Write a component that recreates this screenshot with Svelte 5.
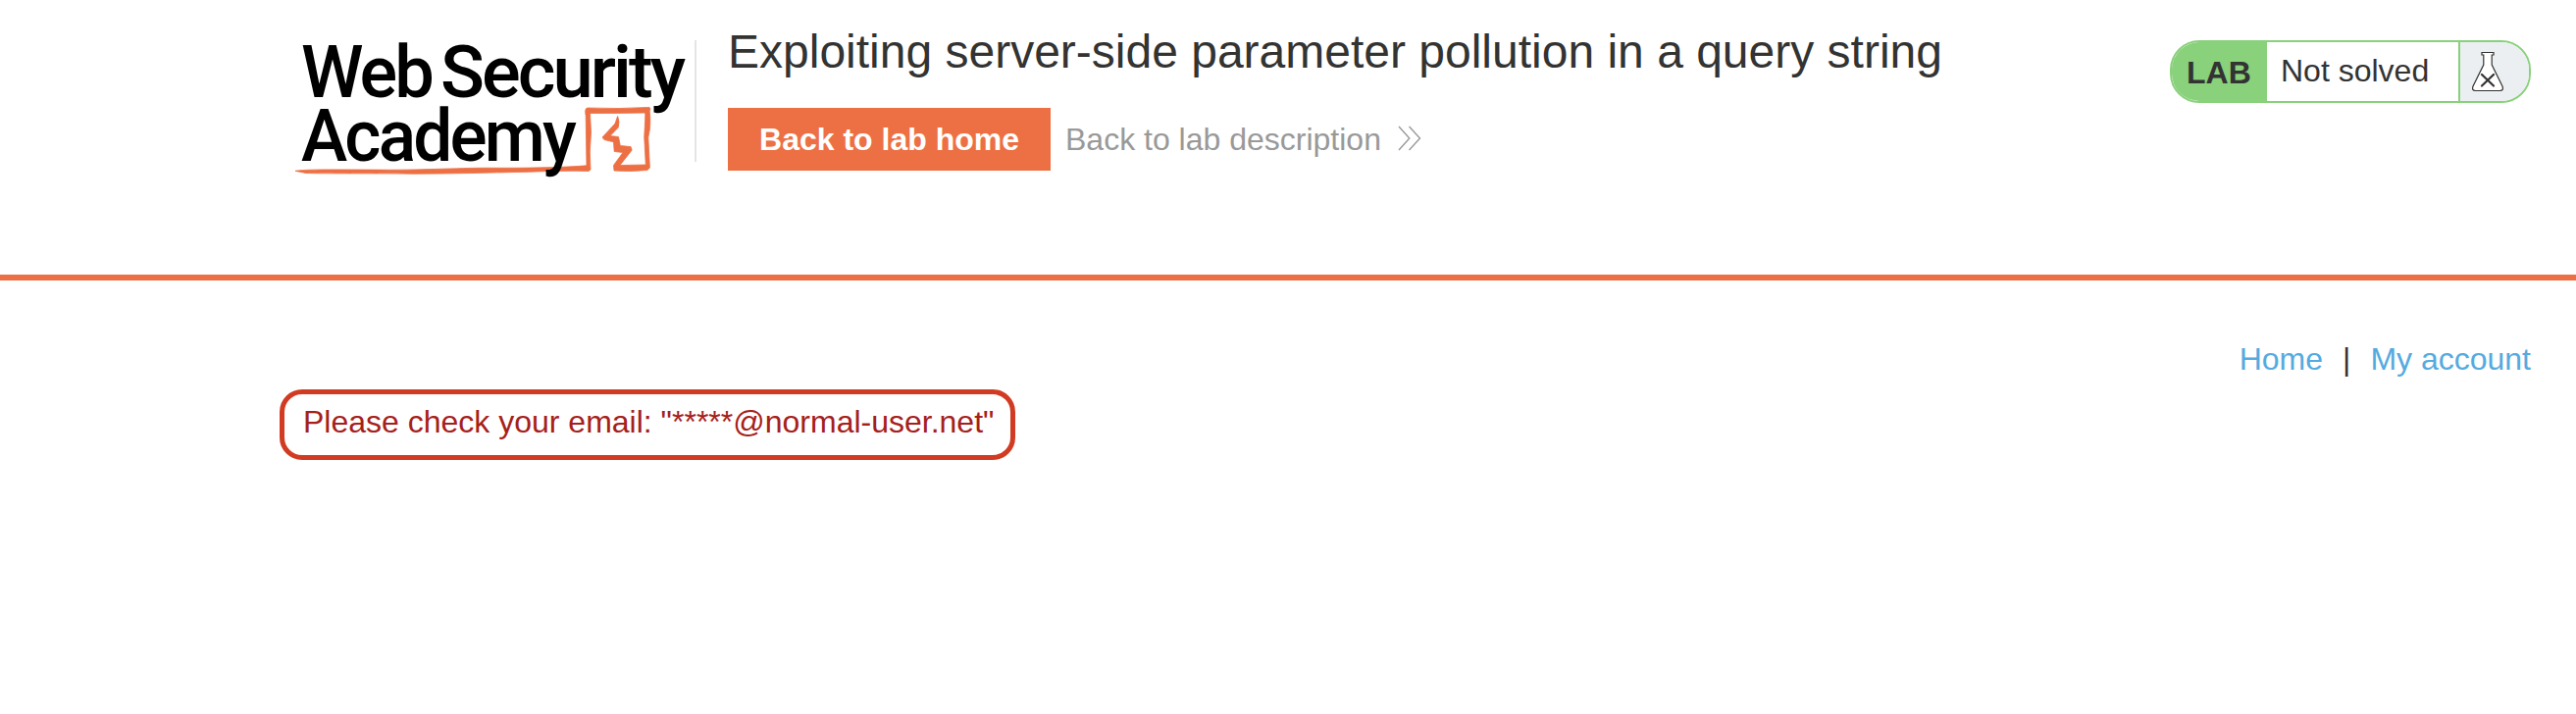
<script>
  const title = 'Exploiting server-side parameter pollution in a query string';
  const message = 'Please check your email: "*****@normal-user.net"';
</script>

<div class="page">
  <header class="banner">
    <a class="logo" href="#home" aria-label="Web Security Academy">
      <svg width="408" height="185" viewBox="300 10 408 185">
        <g class="sketch">
          <path d="M301 174.300C310 172.600 340 172.800 380 173.100C430 173.700 462 171.200 500 171.200C540 171.500 577 170.600 598 168.800L597.200 118Q595.600 110.300 599 110Q630 111.300 662 109.400Q663.800 110.500 662.200 113Q664 128 660.800 140L662.400 171L660 173.500Q643 175.300 626 174L625.500 168.500L635 155.500L626.200 154.500L625.500 144.800L616 142.500L614 140L627 126L629.600 118.500Q632 124 630.300 130L622 138.500L630.500 139.500L632.300 148.500L643 149.600L644.200 153L632 168.500L658.300 168L656.800 140C657.200 130 658 121 657.700 115Q630 115.500 601.500 115.500L602.500 135L601.300 155L602 173L600 174.500C580 173.800 560 174.500 540 175.200C500 176 460 177.300 420 177.200C375 176.600 330 177.200 312 176.500Z" />
        </g>
        <g class="wordmark">
          <text x="307" y="98.500" textLength="133" lengthAdjust="spacingAndGlyphs">Web</text>
          <text x="449" y="98.500" textLength="247" lengthAdjust="spacingAndGlyphs">Security</text>
          <text x="307" y="163.500" textLength="278" lengthAdjust="spacingAndGlyphs">Academy</text>
        </g>
      </svg>
    </a>
    <div class="heading">
      <h2>{title}</h2>
      <div class="actions">
        <a class="button" href="#lab">Back to lab home</a>
        <a class="back" href="#description">
          <span>Back to lab description</span>
          <svg width="24" height="26" viewBox="0 0 24 26"><path d="M1 1L11.800 13L1 25M11.500 1L22.500 13L11.500 25" /></svg>
        </a>
      </div>
    </div>
    <div class="status">
      <span class="lab">LAB</span>
      <span class="state">Not solved</span>
      <span class="flask">
        <svg width="34" height="42" viewBox="0 0 34 42">
          <path class="glass" d="M11 1.500H23V4H21.200V14L32 36Q33.500 40.500 29.500 40.500H4.500Q.5 40.500 2 36L12.800 14V4H11Z" />
          <path class="cross" d="M11 24L23 35.500M23 24L11 35.500" />
        </svg>
      </span>
    </div>
  </header>

  <nav>
    <a href="#home">Home</a>
    <span>|</span>
    <a href="#account">My account</a>
  </nav>

  <main>
    <p>{message}</p>
  </main>
</div>

<style>
  :global(body) {
    margin: 0;
    background: #fff;
  }
  .page {
    box-sizing: border-box;
    height: 728px;
    overflow: hidden;
    font: 32px/36px "Liberation Sans", Arial, sans-serif;
    color: #333332;
  }
  a {
    text-decoration: none;
  }
  svg {
    display: block;
  }
  .banner {
    box-sizing: border-box;
    height: 286px;
    padding: 0 46px 0 300px;
    border-bottom: 6px solid #ed7044;
    display: flex;
    align-items: flex-start;
  }
  .logo {
    margin-top: 10px;
  }
  .sketch {
    fill: #ed7044;
    stroke: #ed7044;
    stroke-width: 0.8;
  }
  .wordmark {
    font: 500 75px Roboto, sans-serif;
    letter-spacing: -3px;
    fill: #000;
  }
  .heading {
    margin-top: 41px;
    height: 124px;
    border-left: 2px solid #e5e5e5;
    padding-left: 32px;
  }
  h2 {
    margin: -16px 0 0;
    font-size: 48px;
    line-height: 56px;
    font-weight: 400;
    white-space: nowrap;
  }
  .actions {
    display: flex;
    margin-top: 29px;
    line-height: 64px;
  }
  .button {
    box-sizing: border-box;
    width: 329px;
    height: 64px;
    background: #ed7044;
    color: #fff;
    font-weight: 700;
    text-align: center;
    white-space: nowrap;
  }
  .back {
    margin-left: 15px;
    color: #999;
    display: flex;
    white-space: nowrap;
  }
  .back svg {
    margin: 18px 0 0 17px;
    fill: none;
    stroke: #999;
    stroke-width: 1.4;
  }
  .status {
    box-sizing: border-box;
    width: 368px;
    height: 64px;
    margin: 41px 0 0 auto;
    border: 2px solid #89d17b;
    border-radius: 30px;
    display: flex;
    overflow: hidden;
    line-height: 60px;
  }
  .lab {
    box-sizing: border-box;
    width: 97px;
    padding: 1px 0 0 15px;
    background: #89d17b;
    font-weight: 700;
  }
  .state {
    box-sizing: border-box;
    width: 195px;
    padding-left: 14px;
    line-height: 58px;
  }
  .flask {
    flex: 1;
    border-left: 2px solid #89d17b;
    background: #ebeff2;
    padding: 9px 0 0 11px;
  }
  .glass {
    fill: #fff;
    stroke: #333332;
    stroke-width: 1.2;
  }
  .cross {
    fill: none;
    stroke: #333332;
    stroke-width: 2.200;
    stroke-linecap: round;
  }
  nav {
    display: flex;
    justify-content: flex-end;
    padding: 62px 46px 0 0;
  }
  nav a {
    color: #55aadf;
  }
  nav span {
    margin: 0 20px;
  }
  main {
    padding: 13px 0 0 285px;
  }
  p {
    box-sizing: border-box;
    width: 750px;
    height: 72px;
    margin: 0;
    border: 5px solid #d13b22;
    border-radius: 23px;
    padding-left: 19px;
    line-height: 56px;
    color: #a6201a;
    white-space: nowrap;
  }
</style>
